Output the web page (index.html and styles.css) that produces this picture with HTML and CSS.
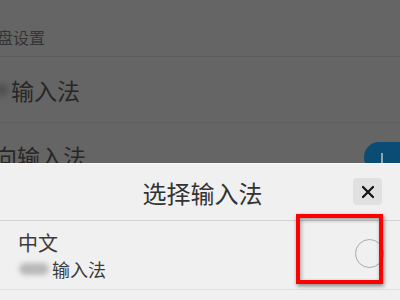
FILE: index.html
```html
<!DOCTYPE html>
<html lang="zh">
<head>
<meta charset="utf-8">
<link rel="stylesheet" href="styles.css">
</head>
<body>
<div class="screen">
  <div class="page">
    <div class="group-title"><span class="cut-left">键盘设置</span></div>
    <div class="row">
      <span class="blob"></span>
      <span class="row-text">输入法</span>
    </div>
    <div class="row row-last">
      <span class="row-text cut-small">向输入法</span>
      <span class="toggle"><span class="toggle-bar"></span></span>
    </div>
  </div>
  <div class="sheet">
    <div class="sheet-head">
      <span class="sheet-title">选择输入法</span>
      <span class="close">
        <svg width="14" height="14" viewBox="0 0 14 14"><path d="M2 2 L12 12 M12 2 L2 12" stroke="#111" stroke-width="2.2" stroke-linecap="round"/></svg>
      </span>
    </div>
    <div class="option">
      <div class="option-text">
        <div class="option-lang">中文</div>
        <div class="option-name"><span class="blob2"></span>输入法</div>
      </div>
      <span class="radio"></span>
    </div>
    <div class="highlight"></div>
  </div>
</div>
</body>
</html>
```

FILE: styles.css
```css
html, body {
  margin: 0;
  padding: 0;
}
body {
  width: 400px;
  height: 300px;
  overflow: hidden;
  font-family: "Noto Sans CJK SC", "Noto Sans", sans-serif;
}
.screen {
  position: relative;
  width: 400px;
  height: 300px;
  overflow: hidden;
  background: #656565;
}
.page {
  display: flex;
  flex-direction: column;
}
.group-title {
  height: 57px;
  box-sizing: border-box;
  padding-top: 26px;
  font-size: 16px;
  line-height: 22px;
  color: #353535;
  border-bottom: 1px solid #5d5d5d;
  white-space: nowrap;
}
.cut-left {
  display: inline-block;
  margin-left: -19px;
}
.row {
  height: 66px;
  box-sizing: border-box;
  display: flex;
  align-items: center;
  border-bottom: 1px solid #5d5d5d;
  white-space: nowrap;
}
.row-last {
  border-bottom: none;
}
.row-text {
  font-size: 23px;
  line-height: 30px;
  color: #272727;
}
.blob {
  width: 12px;
  height: 12px;
  border-radius: 6px;
  background: #4e4e4e;
  filter: blur(3px);
  margin-left: -4px;
  margin-right: 3px;
}
.cut-small {
  margin-left: -6px;
}
.toggle {
  margin-left: auto;
  margin-right: -20px;
  width: 56px;
  height: 30px;
  border-radius: 15px;
  background: #0b4c74;
  display: flex;
  align-items: flex-end;
  padding-left: 17px;
  box-sizing: border-box;
  align-self: flex-start;
  margin-top: 19px;
}
.toggle-bar {
  width: 2px;
  height: 12px;
  margin-bottom: 7px;
  background: #8fa4b4;
}
.sheet {
  position: absolute;
  left: 0;
  right: 0;
  top: 163px;
  bottom: 0;
  background: #f0f0f0;
  border-top: 1px solid #f6f6f6;
  display: flex;
  flex-direction: column;
}
.sheet-head {
  height: 57px;
  box-sizing: border-box;
  display: flex;
  align-items: center;
  justify-content: center;
  border-bottom: 1px solid #d3d3d3;
  position: relative;
}
.sheet-title {
  font-size: 24px;
  line-height: 30px;
  color: #333;
  margin-top: 2px;
  margin-left: 5px;
}
.close {
  position: absolute;
  right: 18px;
  top: 14px;
  width: 29px;
  height: 27px;
  border-radius: 4px;
  background: #e0e0e0;
  display: flex;
  align-items: center;
  justify-content: center;
}
.option {
  height: 69px;
  box-sizing: border-box;
  display: flex;
  align-items: center;
  padding: 0 16px 0 18px;
  border-bottom: 1px solid #e0e0e0;
}
.option-text {
  display: flex;
  flex-direction: column;
  gap: 3px;
}
.option-lang {
  font-size: 20px;
  line-height: 24px;
  color: #3c3c3c;
}
.option-name {
  font-size: 18px;
  line-height: 22px;
  color: #3c3c3c;
  display: flex;
  align-items: center;
}
.blob2 {
  width: 30px;
  height: 12px;
  border-radius: 6px;
  background: #b9b9b9;
  filter: blur(2.5px);
  margin-right: 3px;
  margin-left: 1px;
}
.radio {
  margin-left: auto;
  width: 29px;
  height: 29px;
  box-sizing: border-box;
  border-radius: 50%;
  border: 1.6px solid #a9a9a9;
  margin-bottom: 3px;
}
.highlight {
  position: absolute;
  left: 296px;
  top: 50px;
  width: 87px;
  height: 70px;
  box-sizing: border-box;
  border: 4px solid #ff0000;
  box-shadow: 1px 2px 4px rgba(0,0,0,0.45), inset 1px 2px 4px rgba(0,0,0,0.35);
}
```
